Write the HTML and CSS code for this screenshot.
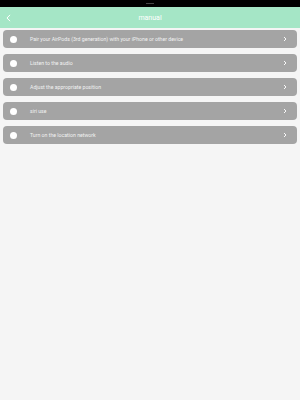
FILE: index.html
```html
<!DOCTYPE html>
<html lang="en">
<head>
  <meta charset="utf-8" />
  <title>manual</title>
  <meta name="viewport" content="width=device-width, initial-scale=1" />
  <link rel="stylesheet" href="styles.css">
</head>
<body>
  <div class="status-bar"><span class="notch"></span></div>

  <header class="nav">
    <svg class="back" viewBox="0 0 8 12" width="5" height="8">
      <polyline points="6.5,1 1.5,6 6.5,11" fill="none" stroke="#fff" stroke-width="1.6" />
    </svg>
    <h1>manual</h1>
  </header>

  <ul class="steps">
    <li class="step">
      <span class="dot"></span>
      <span class="label">Pair your AirPods (3rd generation) with your iPhone or other device</span>
      <svg class="chev" viewBox="0 0 6 8" width="4" height="6"><polyline points="1.5,1 4.5,4 1.5,7" /></svg>
    </li>
    <li class="step">
      <span class="dot"></span>
      <span class="label">Listen to the audio</span>
      <svg class="chev" viewBox="0 0 6 8" width="4" height="6"><polyline points="1.5,1 4.5,4 1.5,7" /></svg>
    </li>
    <li class="step">
      <span class="dot"></span>
      <span class="label">Adjust the appropriate position</span>
      <svg class="chev" viewBox="0 0 6 8" width="4" height="6"><polyline points="1.5,1 4.5,4 1.5,7" /></svg>
    </li>
    <li class="step">
      <span class="dot"></span>
      <span class="label">siri use</span>
      <svg class="chev" viewBox="0 0 6 8" width="4" height="6"><polyline points="1.5,1 4.5,4 1.5,7" /></svg>
    </li>
    <li class="step">
      <span class="dot"></span>
      <span class="label">Turn on the location network</span>
      <svg class="chev" viewBox="0 0 6 8" width="4" height="6"><polyline points="1.5,1 4.5,4 1.5,7" /></svg>
    </li>
  </ul>
</body>
</html>
```

FILE: styles.css
```css
:root {
  --green: #a5e6c6;
  --bg: #f5f5f5;
  --row: #a4a4a4;
  --text: #f2f2f2;
}

* { box-sizing: border-box; margin: 0; padding: 0; }

body {
  font-family: Roboto, "Liberation Sans", sans-serif;
  background: var(--bg);
  width: 300px;
  height: 400px;
  overflow: hidden;
}

.status-bar {
  height: 7px;
  background: #000;
  display: flex;
  justify-content: center;
  align-items: center;
}

.notch {
  width: 8px;
  height: 1px;
  background: #444;
}

.nav {
  height: 21px;
  background: var(--green);
  display: flex;
  align-items: center;
  justify-content: center;
  position: relative;
}

.nav h1 {
  font-size: 7px;
  font-weight: 400;
  color: #fff;
}

.back {
  position: absolute;
  left: 6px;
  top: 7px;
}

.steps {
  list-style: none;
  padding: 2px 3px 0;
  display: flex;
  flex-direction: column;
  gap: 6px;
}

.step {
  height: 18px;
  background: var(--row);
  border-radius: 4px;
  display: flex;
  align-items: center;
  padding: 0 10px 0 7px;
  color: var(--text);
}

.dot {
  width: 7px;
  height: 7px;
  border-radius: 50%;
  background: #fff;
  flex: none;
}

.label {
  flex: 1;
  font-size: 5.2px;
  margin-left: 13px;
  white-space: nowrap;
}

.chev {
  flex: none;
  fill: none;
  stroke: #fff;
  stroke-width: 1.4;
}
```
